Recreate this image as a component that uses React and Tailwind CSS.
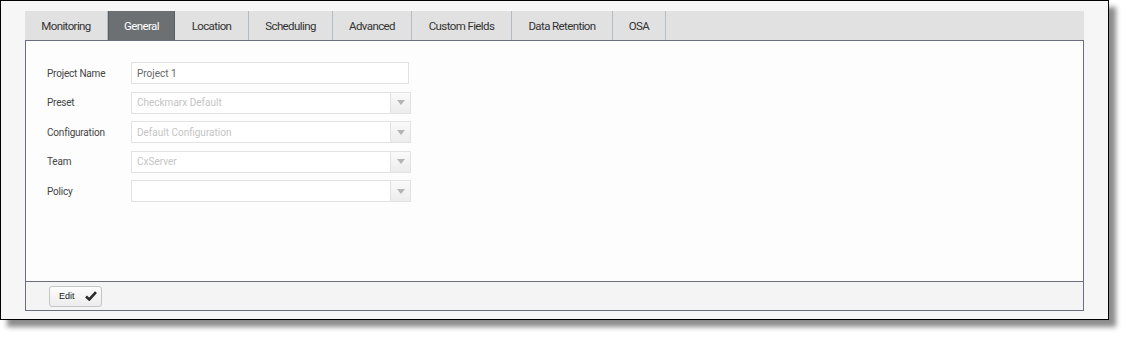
const tabs = ["Monitoring", "General", "Location", "Scheduling", "Advanced", "Custom Fields", "Data Retention", "OSA"];
const tabWidths = [83, 67, 74, 84, 79, 100, 101, 53];

const fields = [
  { label: "Project Name", value: "Project 1", type: "input" },
  { label: "Preset", value: "Checkmarx Default", type: "select" },
  { label: "Configuration", value: "Default Configuration", type: "select" },
  { label: "Team", value: "CxServer", type: "select" },
  { label: "Policy", value: "", type: "select" },
];

function Field({ field }) {
  if (field.type === "input") {
    return (
      <div className="flex h-[22px] w-[278px] items-center border border-[#e2e2e2] bg-white px-[5px] text-[10px] text-[#666]">
        {field.value}
      </div>
    );
  }
  return (
    <div className="flex h-[22px] w-[280px] border border-[#e2e2e2] bg-white">
      <div className="flex flex-1 items-center px-[5px] text-[10px] text-[#c4c4c4]">{field.value}</div>
      <div className="flex w-[20px] items-center justify-center border-l border-[#e2e2e2] bg-gradient-to-b from-[#fafafa] to-[#ececec]">
        <svg width="8" height="5" viewBox="0 0 8 5">
          <path d="M0 0 L8 0 L4 5 Z" fill="#b4b4b4" />
        </svg>
      </div>
    </div>
  );
}

export default function App() {
  return (
    <div className="h-[340px] w-[1129px] bg-white font-['Roboto',sans-serif]">
      <div className="h-[320px] w-[1109px] border border-black bg-[#f6f6f6] pt-[10px] pl-[24px] pr-[24px] shadow-[7px_7px_5px_rgba(0,0,0,0.45)]">
        {/* tab bar */}
        <div className="flex h-[29px] bg-[#e1e1e1]">
          {tabs.map((t, i) => (
            <div
              key={t}
              style={{ width: tabWidths[i] }}
              className={
                t === "General"
                  ? "flex items-center justify-center border-x border-[#5c6063] bg-[#6c7073] pt-[2px] text-[11.5px] tracking-[-0.6px] text-white"
                  : "flex items-center justify-center border-r border-[#b4bcc6] pt-[2px] text-[11.5px] tracking-[-0.6px] text-[#333]"
              }
            >
              {t}
            </div>
          ))}
        </div>

        {/* content */}
        <div className="flex h-[271px] flex-col border border-[#6b6e7e] bg-[#fdfdfd]">
          <div className="flex flex-1 flex-col gap-[7.6px] pt-[21px] pl-[21px]">
            {fields.map((f) => (
              <div key={f.label} className="flex items-center">
                <div className="w-[84px] text-[10px] tracking-[-0.2px] text-[#444]">{f.label}</div>
                <Field field={f} />
              </div>
            ))}
          </div>
          <div className="flex h-[29px] items-center border-t border-[#6b6e7e] bg-[#f4f4f4] pl-[23px]">
            <button className="flex h-[21px] w-[53px] items-center justify-between rounded-[3px] border border-[#c6c6c6] bg-gradient-to-b from-[#fdfdfd] to-[#ececec] pl-[9px] pr-[4px] font-['Liberation_Sans',sans-serif] text-[9px] text-[#222]">
              <span className="pt-[1px]">Edit</span>
              <svg width="12" height="10" viewBox="0 0 12 10">
                <path d="M1 5.5 L4.3 8.5 L11 1.2" fill="none" stroke="#2b2b2b" strokeWidth="2.6" />
              </svg>
            </button>
          </div>
        </div>
      </div>
    </div>
  );
}
